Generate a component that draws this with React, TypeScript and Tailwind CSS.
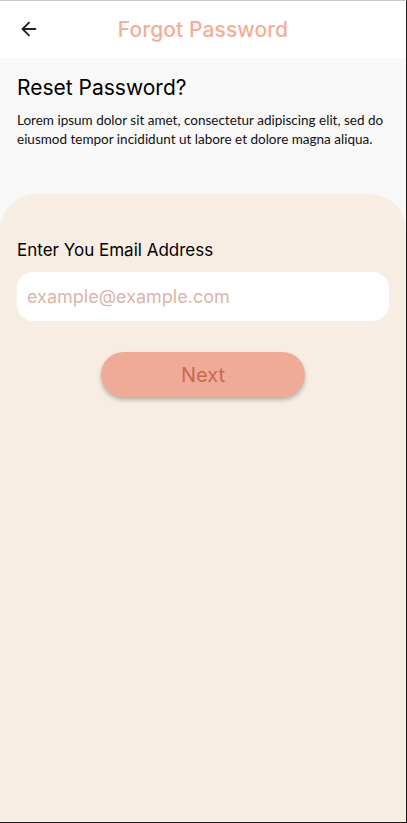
import { ArrowLeft } from 'lucide-react';

export default function App() {
  return (
    <div className="flex h-[823px] w-[407px] flex-col overflow-hidden border-t border-r border-b border-t-[#c8c8c8] border-r-[#1a1a1a] border-b-[#1a1a1a] bg-[#f8f8f8] font-['Inter',sans-serif]">
      {/* header */}
      <div className="relative flex h-[57px] items-center justify-center bg-white">
        <button className="absolute left-[18px] top-[17px] text-[#222]">
          <ArrowLeft size={22} strokeWidth={2} />
        </button>
        <h1 className="text-[21px] font-medium tracking-[0.1px] text-[#f4ad97]">Forgot Password</h1>
      </div>

      {/* intro */}
      <div className="px-[17px] pt-[17px] pb-[45px]">
        <h2 className="text-[21px] font-normal leading-[26px] text-black">Reset Password?</h2>
        <p className="mt-[10px] font-['Lato',sans-serif] text-[13.5px] leading-[19px] text-[#111]">
          Lorem ipsum dolor sit amet, consectetur adipiscing elit, sed do eiusmod tempor incididunt ut labore et
          dolore magna aliqua.
        </p>
      </div>

      {/* card */}
      <div className="flex-1 rounded-t-[36px] bg-[#f8ede2] px-[17px] pt-[44px]">
        <label className="block text-[17px] leading-[24px] text-black">Enter You Email Address</label>
        <input
          type="email"
          placeholder="example@example.com"
          className="mt-[10px] h-[49px] w-[372px] rounded-[16px] bg-white px-[10px] text-[18px] text-[#333] outline-none placeholder:text-[#dcb5a9]"
        />
        <div className="mt-[31px] flex justify-center">
          <button className="h-[45px] w-[204px] rounded-full bg-[#f0ab98] text-[20px] text-[#c7694f] shadow-[0_3px_4px_rgba(0,0,0,0.25)]">
            Next
          </button>
        </div>
      </div>
    </div>
  );
}
